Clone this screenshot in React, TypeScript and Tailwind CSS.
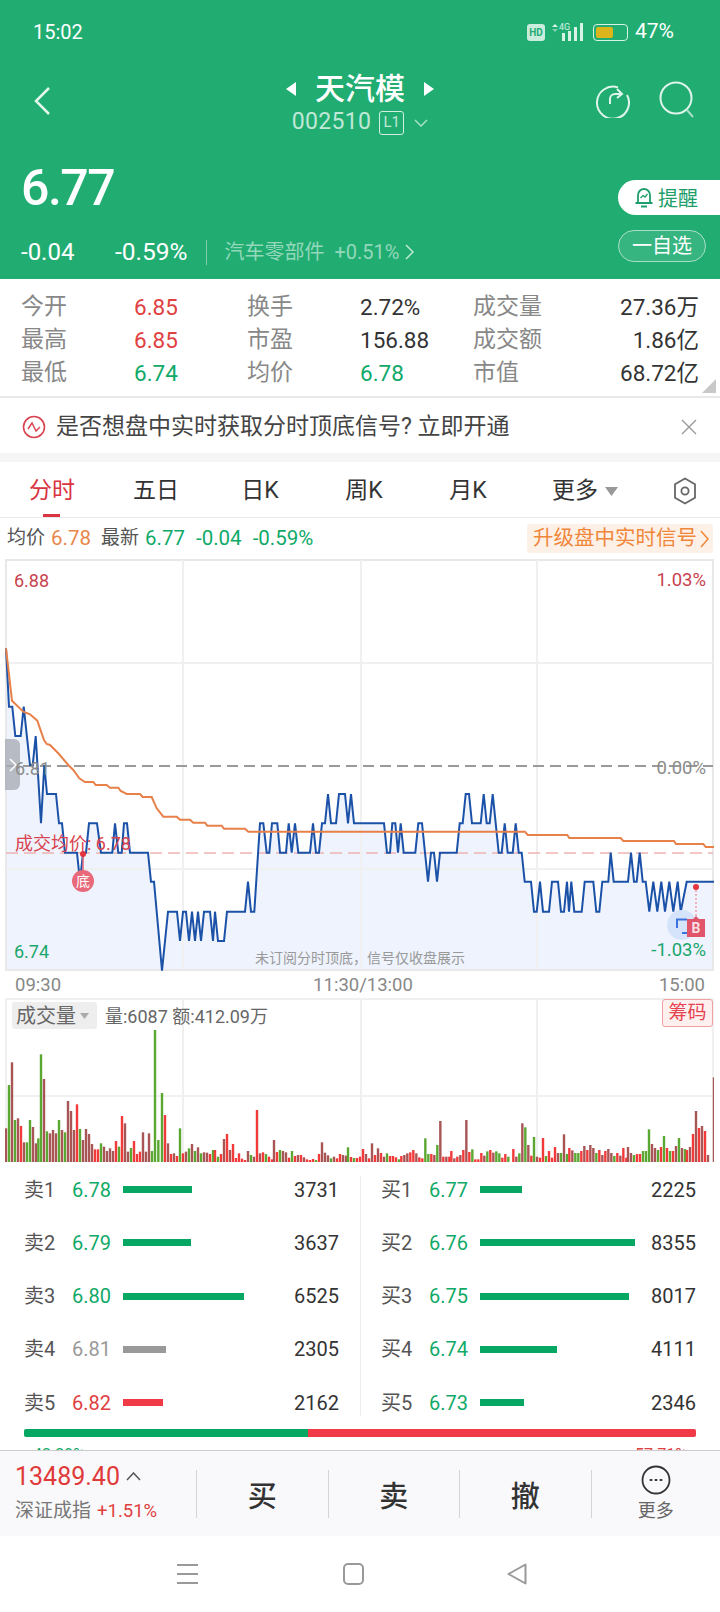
import React from "react";

// chart traces are in crop coordinates: x / 3, 555 + y / 3
const priceA = "18,280 27,455 37,455 46,543 62,543 71,455 90,630 98,630 107,543 123,805 133,630 141,717 168,717 177,805 186,805 195,893 231,893 240,980 249,893 258,893 267,805 291,805 303,893 337,893 345,805 355,893 365,893 372,805 381,805 390,893 444,893 453,980 462,980 486,1247 504,1070 531,1070 540,1158 549,1070 558,1070 567,1158 576,1070 585,1158 594,1070 603,1158 612,1070 630,1070 639,1158 645,1070 654,1158 672,1158 681,1070 735,1070 744,980 753,1070 763,1070 780,805 790,805 800,893 808,893 816,805 832,805 840,893 858,893 866,805 875,893 885,805 895,893 930,893 939,805 948,893 957,893 966,805 975,805 984,717 993,805 1008,805 1017,717 1035,717 1044,805 1053,717 1062,805 1080,805";
const priceB = "1152,805 1161,893 1170,893 1177,805 1186,805 1194,893 1202,805 1211,893 1246,893 1255,805 1266,805 1275,893 1284,980 1293,893 1302,893 1311,980 1320,893 1370,893 1379,805 1388,805 1397,717 1407,717 1416,805 1442,805 1451,717 1460,805 1469,805 1478,717 1487,805 1496,893 1505,893 1514,805 1523,893 1538,893 1547,805 1556,893 1565,893 1574,980 1593,980 1602,1070 1610,1070 1620,980 1629,1070 1647,1070 1656,980 1674,980 1683,1070 1692,1070 1701,980 1707,1070 1714,980 1723,1070 1745,1070 1754,980 1780,980 1789,1070 1798,1070 1807,980 1825,980 1832,893 1841,980 1884,980 1893,893 1902,980 1910,980 1919,893 1928,980 1937,980 1948,1070 1960,980 1972,1070 1984,980 1995,1070 2008,980 2020,1070 2033,980 2042,1070 2060,980 2145,980";
const avgLine = "18,280 36,437 70,470 90,478 112,497 132,555 140,567 150,570 175,595 205,630 220,645 238,670 255,681 280,681 287,690 320,690 330,698 355,698 362,708 380,717 420,717 428,726 455,726 470,760 490,785 530,785 540,794 570,794 580,803 615,803 622,812 665,812 672,821 735,821 745,830 1575,830 1583,840 1702,840 1708,849 1862,849 1870,858 2022,858 2028,867 2110,867 2117,876 2145,876";

const toAbs = (s: string) =>
  s
    .split(" ")
    .map((p) => {
      const [x, y] = p.split(",").map(Number);
      return `${(x / 3).toFixed(1)},${(555 + y / 3).toFixed(1)}`;
    })
    .join(" ");

const pricePoints = toAbs(priceA + " " + priceB);

// x:top:colour in the volume crop, r red, d dull red, g green
const volumeLeft = "18:415:d 27:285:g 36:217:d 45:390:g 54:385:d 63:408:r 72:457:d 81:457:g 90:390:g 99:411:d 108:460:d 115:445:g 123:193:g 132:267:d 141:424:g 150:430:d 159:420:d 168:430:d 177:390:g 186:420:d 195:427:g 204:333:d 213:363:d 222:420:d 231:343:r 240:417:g 249:450:d 258:417:d 267:432:d 276:462:d 285:478:r 294:478:r 303:460:g 312:470:d 321:483:d 330:475:d 339:483:d 348:453:r 357:470:g 366:378:r 375:400:d 384:485:d 393:474:g 402:453:r 411:492:r 420:485:r 429:427:d 438:485:d 447:430:d 456:483:g 465:120:g 475:450:g 486:309:g 495:375:r 504:460:d 513:492:r 522:490:d 531:498:r 540:415:g 549:490:r 558:485:d 567:475:g 576:462:d 585:483:g 594:472:d 603:490:g 612:487:d 621:488:d 630:492:r 639:480:g 645:480:r 654:500:g 663:492:r 672:447:d 681:432:r 690:480:d 699:462:r 708:504:r 717:490:r 726:506:r 735:510:r 744:483:d 753:495:g 762:500:d 771:360:r 780:490:d 789:487:r 798:492:g 807:500:r 816:508:r 822:450:d 831:486:r 840:480:g 849:483:d 858:487:d 867:503:r 876:483:g 885:498:r 894:495:d 903:495:r 912:502:d 921:508:r 930:510:r 939:507:r 948:510:g 957:492:r 966:457:d 975:488:d 984:496:d 993:505:g 1002:500:d 1011:505:r 1020:492:r 1029:495:d 1038:497:d 1044:472:g 1053:501:r 1062:504:g 1071:504:r";
const volumeRight = "0:500:r 9:477:r 18:492:d 27:505:r 36:460:d 45:495:r 54:475:d 63:489:r 72:500:d 81:490:g 90:498:r 99:498:r 108:502:r 117:508:g 124:498:r 133:495:d 142:490:d 151:487:r 160:480:r 169:490:d 178:502:r 187:505:r 196:445:g 205:492:g 214:492:r 223:495:d 232:465:g 241:393:d 250:500:r 259:500:d 268:500:r 274:483:r 283:505:d 292:500:r 301:495:d 310:480:r 319:390:d 328:486:r 337:478:g 346:508:r 355:508:r 364:489:r 373:497:d 382:484:g 391:480:r 400:488:d 409:484:g 418:490:g 427:503:r 436:492:r 445:500:g 460:477:r 469:500:d 478:490:g 487:400:d 496:412:g 505:465:d 514:497:r 522:441:g 531:500:d 540:503:r 549:444:r 558:498:g 567:483:r 576:503:r 585:471:r 594:489:d 603:489:g 612:433:d 621:492:g 628:474:r 637:481:d 646:489:g 655:489:g 664:483:r 673:468:d 682:480:r 691:465:d 700:474:d 709:489:g 718:480:r 727:495:d 736:483:r 745:477:d 754:489:d 763:498:g 772:489:r 781:497:d 790:474:r 799:503:r 804:471:d 813:489:d 822:495:g 831:492:r 840:492:r 849:483:g 858:483:g 867:418:g 876:462:d 885:474:d 894:480:g 903:471:r 912:438:g 921:474:r 930:483:g 939:483:r 948:468:d 957:444:g 966:474:d 975:477:g 981:480:r 990:471:d 999:432:r 1008:363:d 1017:414:r 1026:408:d 1035:423:r 1044:495:d 1062:262:d";

const barColors: Record<string, string> = { r: "#f23a3a", d: "#a85555", g: "#5aa832" };

const parseBars = (s: string, offset: number) =>
  s.split(" ").map((item) => {
    const [x, top, c] = item.split(":");
    return { x: (Number(x) + offset) / 3, top: 990 + Number(top) / 3, color: barColors[c] };
  });

const volumeBars = [...parseBars(volumeLeft, 0), ...parseBars(volumeRight, 1080)];

const stats = [
  ["今开", "6.85", "text-[#e0403f]", "换手", "2.72%", "text-[#333]", "成交量", "27.36万"],
  ["最高", "6.85", "text-[#e0403f]", "市盈", "156.88", "text-[#333]", "成交额", "1.86亿"],
  ["最低", "6.74", "text-[#0fa968]", "均价", "6.78", "text-[#0fa968]", "市值", "68.72亿"],
];

const sellRows = [
  { label: "卖1", price: "6.78", qty: "3731", width: 69, text: "text-[#0fa968]", bar: "bg-[#06a763]" },
  { label: "卖2", price: "6.79", qty: "3637", width: 67.5, text: "text-[#0fa968]", bar: "bg-[#06a763]" },
  { label: "卖3", price: "6.80", qty: "6525", width: 121, text: "text-[#0fa968]", bar: "bg-[#06a763]" },
  { label: "卖4", price: "6.81", qty: "2305", width: 43, text: "text-[#999]", bar: "bg-[#999]" },
  { label: "卖5", price: "6.82", qty: "2162", width: 40, text: "text-[#e0403f]", bar: "bg-[#f03a47]" },
];

const buyRows = [
  { label: "买1", price: "6.77", qty: "2225", width: 42, text: "text-[#0fa968]", bar: "bg-[#06a763]" },
  { label: "买2", price: "6.76", qty: "8355", width: 155, text: "text-[#0fa968]", bar: "bg-[#06a763]" },
  { label: "买3", price: "6.75", qty: "8017", width: 149, text: "text-[#0fa968]", bar: "bg-[#06a763]" },
  { label: "买4", price: "6.74", qty: "4111", width: 77, text: "text-[#0fa968]", bar: "bg-[#06a763]" },
  { label: "买5", price: "6.73", qty: "2346", width: 44, text: "text-[#0fa968]", bar: "bg-[#06a763]" },
];

type BookRow = (typeof sellRows)[number];

const BookColumn = ({ rows, className }: { rows: BookRow[]; className: string }) => (
  <div className={`flex flex-col ${className}`}>
    {rows.map((row) => (
      <div key={row.label} className="h-[53.25px] flex items-center">
        <span className="w-[48px] text-[20px] text-[#555]">{row.label}</span>
        <span className={`w-[51px] text-[20px] ${row.text}`}>{row.price}</span>
        <div className="flex-1">
          <div className={`h-[7px] ${row.bar}`} style={{ width: row.width }} />
        </div>
        <span className="text-[20px] text-[#333]">{row.qty}</span>
      </div>
    ))}
  </div>
);

const StatusBar = () => (
  <div className="h-[64px] flex items-center justify-between pl-[33px] pr-[46px] text-white">
    <span className="text-[20px]">15:02</span>
    <div className="flex items-center">
      <span className="w-[18px] h-[17px] rounded-[3px] bg-[#c9ecdc] text-[#21ad72] text-[10px] font-bold flex items-center justify-center">
        HD
      </span>
      <svg className="ml-[6px]" width="36" height="20" viewBox="0 0 36 20" fill="none">
        <path d="M1 5l3-3 3 3z" fill="#d8f2e6" />
        <path d="M1 7l3 3 3-3z" fill="#7fcfae" />
        <text x="8" y="8" fontSize="9" fill="#d8f2e6" fontFamily="Roboto">4G</text>
        <rect x="11" y="11" width="3" height="8" fill="#d8f2e6" />
        <rect x="17" y="9" width="3" height="10" fill="#d8f2e6" />
        <rect x="23" y="5" width="3" height="14" fill="#d8f2e6" />
        <rect x="29" y="1" width="3" height="18" fill="#d8f2e6" />
      </svg>
      <div className="ml-[6px] w-[35px] h-[17px] rounded-[4px] border border-[#d8f2e6] p-[2px] relative">
        <div className="w-[17px] h-full rounded-[2px] bg-[#dcb51c]" />
      </div>
      <span className="ml-[7px] text-[21px]">47%</span>
    </div>
  </div>
);

const HeaderNav = () => (
  <div className="h-[76px] grid grid-cols-[1fr_auto_1fr] items-center text-white">
    <div className="pl-[33px] pb-[2px]">
      <svg width="18" height="30" viewBox="0 0 18 30" fill="none" stroke="#e4f6ee" strokeWidth="2.5">
        <path d="M16 2L3 15l13 13" />
      </svg>
    </div>
    <div className="flex flex-col items-center -mt-[4px]">
      <div className="flex items-center h-[48px]">
        <svg width="11" height="14" viewBox="0 0 11 14" fill="white">
          <path d="M10 0v14L0 7z" />
        </svg>
        <span className="mx-[18px] text-[30px] font-medium leading-none">天汽模</span>
        <svg width="11" height="14" viewBox="0 0 11 14" fill="white">
          <path d="M1 0v14l10-7z" />
        </svg>
      </div>
      <div className="flex items-center h-[26px] text-[#bfe8d6] mt-[-3px]">
        <span className="text-[23px] tracking-[0.3px]">002510</span>
        <span className="ml-[8px] w-[25px] h-[24px] border border-[#d3efe2] rounded-[3px] text-[15px] flex items-center justify-center">
          L1
        </span>
        <svg className="ml-[10px]" width="14" height="8" viewBox="0 0 14 8" fill="none" stroke="#a8dfc7" strokeWidth="1.5">
          <path d="M1 1l6 6 6-6" />
        </svg>
      </div>
    </div>
    <div className="flex justify-end items-center gap-[28px] pr-[24px] pb-[4px]">
      <svg width="36" height="36" viewBox="0 0 36 36" fill="none" stroke="#dff4ea" strokeWidth="2">
        <path d="M24 5.5A16 16 0 1 0 33 13" />
        <path d="M16 22v-5a5 5 0 0 1 5-5h6M23 7l5 5-5 4" />
      </svg>
      <svg width="38" height="40" viewBox="0 0 38 40" fill="none" stroke="#dff4ea" strokeWidth="2">
        <circle cx="18" cy="18" r="15.5" />
        <path d="M29 30l6 7" stroke="#a8dfc7" />
      </svg>
    </div>
  </div>
);

const HeaderQuote = () => (
  <div className="h-[139px] flex justify-between text-white">
    <div className="pl-[21px] pt-[18px]">
      <div className="text-[50px] leading-[60px] font-medium tracking-[-1.5px]">6.77</div>
      <div className="mt-[21px] h-[26px] flex items-center">
        <span className="w-[94px] text-[24px]">-0.04</span>
        <span className="text-[24.5px]">-0.59%</span>
        <span className="ml-[19px] w-px h-[25px] bg-[#7fcfae]" />
        <span className="ml-[17px] text-[20px] text-[#93d8bb]">汽车零部件</span>
        <span className="ml-[10px] text-[20px] text-[#93d8bb]">+0.51%</span>
        <svg className="ml-[6px]" width="9" height="16" viewBox="0 0 9 16" fill="none" stroke="#bfe8d6" strokeWidth="1.5">
          <path d="M1 1l7 7-7 7" />
        </svg>
      </div>
    </div>
    <div className="flex flex-col items-end pt-[40px]">
      <div className="w-[102px] h-[35px] bg-white rounded-l-[18px] flex items-center pl-[16px] text-[#1e9e6a] text-[20px]">
        <svg width="20" height="24" viewBox="0 0 20 24" fill="none" stroke="#1e9e6a" strokeWidth="1.8">
          <path d="M4 16V9a6 6 0 0 1 12 0v7M1.5 17h17M7 20.5h6" />
          <path d="M6.5 12l2.5-2.5 2 1.5 2.5-3" strokeWidth="1.3" />
        </svg>
        <span className="ml-[4px] pt-[3px]">提醒</span>
      </div>
      <div className="mt-[15px] mr-[14px] w-[88px] h-[32px] rounded-full border border-[#a8dfc7] bg-white/10 flex items-center justify-center text-[20px]">
        一自选
      </div>
    </div>
  </div>
);

const StatsTable = () => (
  <div className="relative h-[119px] border-b-2 border-[#e8e8e8] pt-[12px] px-[21px]">
    {stats.map((row) => (
      <div key={row[0]} className="h-[33px] flex items-center text-[23px]">
        <span className="w-[113px] text-[#888]">{row[0]}</span>
        <span className={`w-[113px] text-[22.5px] ${row[2]}`}>{row[1]}</span>
        <span className="w-[113px] text-[#888]">{row[3]}</span>
        <span className={`w-[113px] text-[22.5px] ${row[5]}`}>{row[4]}</span>
        <span className="flex-1 text-[#888]">{row[6]}</span>
        <span className="text-[22.5px] text-[#333]">{row[7]}</span>
      </div>
    ))}
    <svg className="absolute right-[4px] bottom-[3px]" width="14" height="14" viewBox="0 0 14 14" fill="#c8c8c8">
      <path d="M14 0v14H0z" />
    </svg>
  </div>
);

const SignalBanner = () => (
  <div className="h-[55px] flex items-center pl-[22px] pr-[23px] pt-[3px]">
    <svg width="24" height="24" viewBox="0 0 24 24" fill="none" stroke="#d8434f" strokeWidth="1.6">
      <circle cx="12" cy="12" r="10.5" />
      <path d="M6 14l4-6 4 8 4-4" strokeWidth="1.4" />
    </svg>
    <span className="ml-[10px] flex-1 text-[23px] text-[#444]">是否想盘中实时获取分时顶底信号? 立即开通</span>
    <svg width="16" height="16" viewBox="0 0 16 16" fill="none" stroke="#999" strokeWidth="1.4">
      <path d="M1 1l14 14M15 1L1 15" />
    </svg>
  </div>
);

const PeriodTabs = () => (
  <div className="h-[56px] border-b border-[#e8e8e8] flex items-center pt-[3px] text-[23px] text-[#333]">
    <div className="relative w-[104px] h-full flex items-center justify-center text-[#d9343f]">
      分时
      <div className="absolute bottom-0 left-[43px] w-[17px] h-[3px] bg-[#d9343f]" />
    </div>
    <div className="w-[104px] text-center">五日</div>
    <div className="w-[104px] text-center">日K</div>
    <div className="w-[104px] text-center">周K</div>
    <div className="w-[104px] text-center">月K</div>
    <div className="ml-[32px] flex items-center">
      更多
      <svg className="ml-[7px]" width="13" height="9" viewBox="0 0 13 9" fill="#999">
        <path d="M0 0h13L6.5 9z" />
      </svg>
    </div>
    <svg className="ml-[55px]" width="24" height="28" viewBox="0 0 24 28" fill="none" stroke="#666" strokeWidth="1.8">
      <path d="M12 1.5l10 5.8v13.4l-10 5.8-10-5.8V7.300z" />
      <circle cx="12" cy="14" r="3.600" />
    </svg>
  </div>
);

const QuoteLine = () => (
  <div className="h-[41px] flex items-center justify-between pl-[7px] pr-[7px] text-[20.5px]">
    <div className="flex items-center">
      <span className="text-[19px] text-[#555]">均价</span>
      <span className="ml-[6px] text-[#e8874a]">6.78</span>
      <span className="ml-[10px] text-[19px] text-[#555]">最新</span>
      <span className="ml-[6px] text-[#0fa968]">6.77</span>
      <span className="ml-[11px] text-[#0fa968]">-0.04</span>
      <span className="ml-[11px] text-[#0fa968]">-0.59%</span>
    </div>
    <div className="w-[186px] h-[29px] rounded-[3px] bg-[#fdf1e7] flex items-center pl-[6px] text-[20.5px] text-[#f0863a]">
      升级盘中实时信号
      <svg className="ml-[3px]" width="9" height="18" viewBox="0 0 9 18" fill="none" stroke="#f0863a" strokeWidth="1.5">
        <path d="M1 1l7 8-7 8" />
      </svg>
    </div>
  </div>
);

const PriceChart = () => (
  <div className="relative mx-[5px] h-[412px] text-[18px]">
    <svg className="absolute inset-0" width="709" height="412" viewBox="5 559 709 412" fill="none">
      <polygon points={`6,971 ${pricePoints} 714,971`} fill="#eef3fd" />
      <rect x="6" y="560" width="707" height="410" stroke="#e8e8e8" strokeWidth="2" />
      <path d="M183 560v410M361 560v410M537 560v410M6 663h707M6 869h707" stroke="#f0f0f0" strokeWidth="2" />
      <path d="M6 766h707" stroke="#9a9a9a" strokeWidth="2" strokeDasharray="11 6" />
      <path d="M6 853h707" stroke="#efb4b4" strokeWidth="1.5" strokeDasharray="12 6" />
      <polyline points={pricePoints} stroke="#1b52a8" strokeWidth="2" />
      <polyline points={toAbs(avgLine)} stroke="#e8804a" strokeWidth="2" />
      <circle cx="83" cy="854" r="3" fill="#e5343f" />
      <path d="M83 857v14" stroke="#e8697a" strokeWidth="1.500" />
      <circle cx="83" cy="881" r="11" fill="#e8697a" />
      <circle cx="682" cy="925" r="15" fill="#d5e3fb" />
      <path d="M677 928v-8.500h10M682 933h10" stroke="#3b73dd" strokeWidth="2" />
      <circle cx="696" cy="887" r="3" fill="#e5343f" />
      <path d="M696 890v28" stroke="#f0a0a8" strokeWidth="1.500" strokeDasharray="2 2" />
      <path d="M687 919h6l3-3 3 3h6v18h-18z" fill="#e0556a" />
    </svg>
    <span className="absolute left-[9px] top-[8px] text-[#c8434f]">6.88</span>
    <span className="absolute right-[9px] top-[8px] text-[18.5px] text-[#c8434f]">1.03%</span>
    <div className="absolute left-0 top-[180px] w-[15px] h-[51px] rounded-r-[6px] bg-[#a9adb5]/80 flex items-center justify-center">
      <svg width="8" height="14" viewBox="0 0 8 14" fill="none" stroke="white" strokeWidth="1.500">
        <path d="M1 1l6 6-6 6" />
      </svg>
    </div>
    <span className="absolute left-[10px] top-[196px] text-[#8c8c8c]">6.81</span>
    <span className="absolute right-[9px] top-[196px] text-[18.5px] text-[#8c8c8c]">0.00%</span>
    <span className="absolute left-[10px] top-[271px] text-[#d8434f]">成交均价: 6.78</span>
    <span className="absolute left-[67px] top-[311px] w-[22px] h-[22px] flex items-center justify-center text-[14px] text-white">底</span>
    <span className="absolute left-[682px] top-[360px] w-[18px] h-[18px] flex items-center justify-center text-[14px] font-bold text-[#f9dfe3]">B</span>
    <span className="absolute left-[9px] bottom-[6px] text-[#1aa66c]">6.74</span>
    <span className="absolute right-[9px] bottom-[6px] text-[18.5px] text-[#1aa66c]">-1.03%</span>
    <span className="absolute left-[250px] bottom-[2px] text-[14px] text-[#999]">未订阅分时顶底，信号仅收盘展示</span>
  </div>
);

const AxisRow = () => (
  <div className="h-[27px] flex items-center justify-between pl-[15px] pr-[15px] pt-[2px] text-[18.5px] text-[#888]">
    <span>09:30</span>
    <span className="ml-[6px]">11:30/13:00</span>
    <span>15:00</span>
  </div>
);

const VolumeChart = () => (
  <div className="relative mx-[5px] h-[164px]">
    <svg className="absolute inset-0" width="709" height="164" viewBox="5 998 709 164" fill="none">
      <path d="M5 999h709M6 998v164M713 998v164" stroke="#f0f0f0" strokeWidth="2" />
      <path d="M183 998v164M361 998v164M537 998v164M6 1096h707" stroke="#f0f0f0" strokeWidth="2" />
      {volumeBars.map((bar, i) => (
        <rect key={i} x={bar.x - 1.2} y={bar.top} width="2.4" height={1162 - bar.top} fill={bar.color} />
      ))}
    </svg>
    <div className="absolute left-[7px] top-[4px] w-[85px] h-[27px] rounded-[3px] bg-[#eeeeee] flex items-center pl-[4px] text-[20px] text-[#666]">
      成交量
      <svg className="ml-[4px]" width="9" height="6" viewBox="0 0 9 6" fill="#aaa">
        <path d="M0 0h9L4.500 6z" />
      </svg>
    </div>
    <span className="absolute left-[100px] top-[5px] text-[18px] text-[#666]">量:6087 额:412.09万</span>
    <div className="absolute right-[2px] top-[1px] w-[51px] h-[28px] rounded-[3px] border border-[#f0a0a0] bg-[#fff0f0] flex items-center justify-center text-[19px] text-[#e5434f]">
      筹码
    </div>
  </div>
);

const OrderBook = () => (
  <div>
    <div className="flex pt-[1px]">
      <BookColumn rows={sellRows} className="w-[360px] pl-[24px] pr-[21px]" />
      <div className="w-px my-[13px] bg-[#eeeeee]" />
      <BookColumn rows={buyRows} className="flex-1 pl-[20px] pr-[24px]" />
    </div>
    <div className="mx-[24px] h-[8px] rounded-[2px] overflow-hidden flex">
      <div className="w-[284px] bg-[#06a763]" />
      <div className="flex-1 bg-[#f03a47]" />
    </div>
    <div className="h-[13px] overflow-hidden flex justify-between pl-[33px] pr-[33px] pt-[8px] text-[16px] leading-[20px]">
      <span className="text-[#0fa968]">42.29%</span>
      <span className="text-[#e0403f]">57.71%</span>
    </div>
  </div>
);

const FooterBar = () => (
  <div className="h-[86px] bg-[#f9f9fb] border-t border-[#cccccc] flex items-center">
    <div className="w-[196px] pl-[15px] h-full flex flex-col">
      <div className="flex items-center h-[42px] pt-[8px]">
        <span className="text-[25px] text-[#e03a3a]">13489.40</span>
        <svg className="ml-[6px]" width="15" height="9" viewBox="0 0 15 9" fill="none" stroke="#555" strokeWidth="1.500">
          <path d="M1 8l6.500-7L14 8" />
        </svg>
      </div>
      <div className="flex items-center mt-[4px]">
        <span className="text-[19px] text-[#777]">深证成指</span>
        <span className="ml-[6px] text-[18.5px] text-[#e0403f]">+1.51%</span>
      </div>
    </div>
    {["买", "卖", "撤"].map((action) => (
      <div key={action} className="w-[131.500px] h-[48px] border-l border-[#d5d5d5] flex items-center justify-center pt-[7px] text-[29px] font-medium text-[#333]">
        {action}
      </div>
    ))}
    <div className="w-px h-[48px] bg-[#d5d5d5]" />
    <div className="flex-1 h-full pt-[14px] flex flex-col items-center">
      <svg className="shrink-0" width="30" height="30" viewBox="0 0 30 30" fill="none" stroke="#333" strokeWidth="1.800">
        <circle cx="15" cy="15" r="13.500" />
        <path d="M9.500 15h1M14.500 15h1M19.500 15h1" strokeWidth="2" strokeLinecap="round" />
      </svg>
      <span className="mt-[5px] text-[18px] leading-[22px] text-[#666]">更多</span>
    </div>
  </div>
);

const SystemNav = () => (
  <div className="h-[75px] bg-white flex items-center pl-[177px]">
    <svg width="21" height="22" viewBox="0 0 21 22" fill="none" stroke="#999" strokeWidth="2">
      <path d="M0 2h21M0 11h21M0 20h21" />
    </svg>
    <svg className="ml-[145px]" width="21" height="22" viewBox="0 0 21 22" fill="none" stroke="#999" strokeWidth="2">
      <rect x="1" y="1" width="19" height="20" rx="4" />
    </svg>
    <svg className="ml-[143px]" width="20" height="22" viewBox="0 0 20 22" fill="none" stroke="#999" strokeWidth="2">
      <path d="M18.500 1.500v19L1.500 11z" strokeLinejoin="round" />
    </svg>
  </div>
);

export default function App() {
  return (
    <div className="w-[720px] h-[1612px] overflow-hidden bg-white flex flex-col [font-family:Roboto,'Noto_Sans_CJK_SC',sans-serif]">
      <div className="bg-[#21ad72]">
        <StatusBar />
        <HeaderNav />
        <HeaderQuote />
      </div>
      <StatsTable />
      <SignalBanner />
      <div className="h-[9px] bg-[#f5f5f5]" />
      <PeriodTabs />
      <QuoteLine />
      <PriceChart />
      <AxisRow />
      <VolumeChart />
      <OrderBook />
      <FooterBar />
      <SystemNav />
    </div>
  );
}
